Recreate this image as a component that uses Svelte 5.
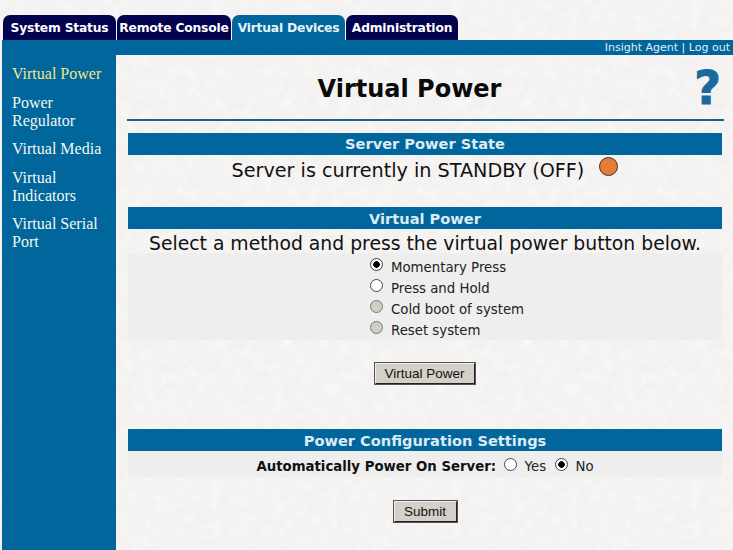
<script lang="ts">
	const tabs = [
		{ label: 'System Status', width: 113 },
		{ label: 'Remote Console', width: 114 },
		{ label: 'Virtual Devices', width: 113, active: true },
		{ label: 'Administration', width: 112 },
	]
	const sideLinks = ['Virtual Power', 'Power Regulator', 'Virtual Media', 'Virtual Indicators', 'Virtual Serial Port']
	const methods = [
		{ label: 'Momentary Press', checked: true },
		{ label: 'Press and Hold' },
		{ label: 'Cold boot of system', disabled: true },
		{ label: 'Reset system', disabled: true },
	]
</script>

<div class="page">
	<div class="tabs">
		{#each tabs as tab}
			<div class="tab" class:active={tab.active} style="width: {tab.width}px">{tab.label}</div>
		{/each}
	</div>
	<div class="topbar">
		<span>Insight Agent</span> | <span>Log out</span>
	</div>
	<div class="columns">
		<nav class="side">
			{#each sideLinks as link, i}
				<div class="side-link" class:current={i === 0}>{link}</div>
			{/each}
		</nav>
		<main class="content">
			<div class="heading">
				<h1>Virtual Power</h1>
				<span class="help">?</span>
			</div>
			<div class="bar first">Server Power State</div>
			<div class="state">
				Server is currently in STANDBY (OFF)
				<span class="led"></span>
			</div>
			<div class="bar lower">Virtual Power</div>
			<div class="prompt">Select a method and press the virtual power button below.</div>
			<div class="methods">
				{#each methods as m}
					<div class="method">
						<span class="radio" class:checked={m.checked} class:disabled={m.disabled}></span>
						{m.label}
					</div>
				{/each}
			</div>
			<div class="btn-row power-row"><button class="power-btn">Virtual Power</button></div>
			<div class="bar lower">Power Configuration Settings</div>
			<div class="auto">
				<b>Automatically Power On Server:</b>
				<span class="radio"></span> Yes
				<span class="radio checked second"></span> No
			</div>
			<div class="btn-row submit-row"><button class="submit-btn">Submit</button></div>
		</main>
	</div>
</div>

<style>
	:global(body) {
		margin: 0;
		background: #f3f2f0;
	}
	.page {
		width: 733px;
		height: 550px;
		overflow: hidden;
		display: flex;
		flex-direction: column;
		background-color: #f3f2f0;
		background-image: url("data:image/svg+xml,%3Csvg xmlns='http://www.w3.org/2000/svg' width='240' height='240'%3E%3Cfilter id='n'%3E%3CfeTurbulence type='fractalNoise' baseFrequency='0.09' numOctaves='3' stitchTiles='stitch'/%3E%3CfeColorMatrix values='0 0 0 0 1 0 0 0 0 1 0 0 0 0 1 1 0 0 0 -0.42'/%3E%3C/filter%3E%3Crect width='240' height='240' filter='url(%23n)'/%3E%3C/svg%3E");
		font-family: "DejaVu Sans", Verdana, sans-serif;
		color: #111;
	}
	.tabs {
		display: flex;
		gap: 1px;
		height: 25px;
		padding: 15px 0 0 3px;
		flex-shrink: 0;
	}
	.tab {
		box-sizing: border-box;
		height: 25px;
		background: #02024f;
		color: #fff;
		font-size: 12.3px;
		font-weight: bold;
		line-height: 26px;
		text-align: center;
		white-space: nowrap;
		border-radius: 7px 7px 0 0;
		letter-spacing: -0.2px;
	}
	.tab.active {
		background: #00669c;
		color: #e8f4fa;
	}
	.topbar {
		box-sizing: border-box;
		height: 15px;
		margin-left: 2px;
		background: #00669c;
		color: #e4eef4;
		font-size: 11px;
		line-height: 15px;
		text-align: right;
		padding-right: 3px;
		flex-shrink: 0;
	}
	.columns {
		display: flex;
		flex: 1;
		min-height: 0;
	}
	.side {
		box-sizing: border-box;
		width: 114px;
		margin-left: 2px;
		padding: 10px 6px 0 10px;
		background: #00669c;
		flex-shrink: 0;
		font-family: "Liberation Serif", "Times New Roman", serif;
		font-size: 16px;
		line-height: 18px;
		color: #f4f8f0;
	}
	.side-link {
		margin-bottom: 10.6px;
	}
	.side-link.current {
		color: #f0e68c;
	}
	.content {
		flex: 1;
		min-width: 0;
		box-sizing: border-box;
		padding: 0 11px 0 12px;
	}
	.heading {
		position: relative;
		box-sizing: border-box;
		height: 66px;
		margin-right: -2px;
		margin-left: -1px;
		border-bottom: 2px solid #1f5f86;
	}
	h1 {
		margin: 0;
		padding: 18px 32px 0 0;
		font-size: 24px;
		line-height: 32px;
		font-weight: bold;
		text-align: center;
		color: #0a0a0a;
	}
	.help {
		position: absolute;
		right: 3px;
		top: 6px;
		font-family: "DejaVu Sans", sans-serif;
		font-weight: bold;
		font-size: 46px;
		line-height: 54px;
		color: #1c6a9c;
		-webkit-text-stroke: 1px #1c6a9c;
	}
	.bar {
		height: 22px;
		background: #00669c;
		color: #dcebf4;
		font-size: 14.6px;
		font-weight: bold;
		line-height: 22px;
		text-align: center;
	}
	.bar.first {
		margin-top: 12px;
	}
	.bar.lower {
		line-height: 23px;
	}
	.state {
		height: 52px;
		font-size: 19.2px;
		line-height: 31px;
		text-align: center;
	}
	.led {
		display: inline-block;
		box-sizing: border-box;
		width: 19px;
		height: 19px;
		margin-left: 9px;
		border-radius: 50%;
		background: #e87b35;
		border: 1.5px solid #333;
		vertical-align: 1px;
	}
	.prompt {
		height: 24px;
		font-size: 18.8px;
		line-height: 29px;
		text-align: center;
		white-space: nowrap;
	}
	.methods {
		box-sizing: border-box;
		height: 87px;
		padding: 4px 0 0 242px;
		background: #eeeeee;
	}
	.method {
		display: flex;
		align-items: center;
		height: 21px;
		font-size: 13.3px;
		color: #222;
		gap: 8px;
	}
	.radio {
		display: inline-block;
		box-sizing: border-box;
		width: 13px;
		height: 13px;
		border-radius: 50%;
		background: #fff;
		border: 1px solid #444;
		position: relative;
		top: -3px;
		flex-shrink: 0;
	}
	.radio.checked {
		background: radial-gradient(circle, #000 0 3px, #fff 3.5px);
	}
	.radio.disabled {
		background: #d0cfc6;
		border-color: #777;
	}
	.btn-row {
		display: flex;
		justify-content: center;
	}
	.power-row {
		height: 89px;
		padding-top: 22px;
		box-sizing: border-box;
		padding-right: 1px;
	}
	button {
		box-sizing: border-box;
		background: #d4d0c8;
		border: 2px solid;
		border-color: #eee #222 #222 #eee;
		outline: 1px solid #555;
		outline-offset: -1px;
		font-family: "Liberation Sans", Arial, sans-serif;
		font-size: 13.5px;
		color: #111;
		padding: 0;
	}
	.power-btn {
		width: 102px;
		height: 23px;
	}
	.submit-btn {
		width: 65px;
		height: 23px;
	}
	.auto {
		height: 26px;
		background: #eeeeee;
		font-size: 13.3px;
		line-height: 31px;
		text-align: center;
		white-space: nowrap;
		color: #222;
	}
	.auto b {
		color: #111;
		margin-right: 1px;
	}
	.auto .radio {
		top: 0;
		margin: 0 3px 0 3px;
	}
	.auto .radio.second {
		margin-left: 5px;
	}
	.submit-row {
		padding-top: 23px;
	}
</style>
